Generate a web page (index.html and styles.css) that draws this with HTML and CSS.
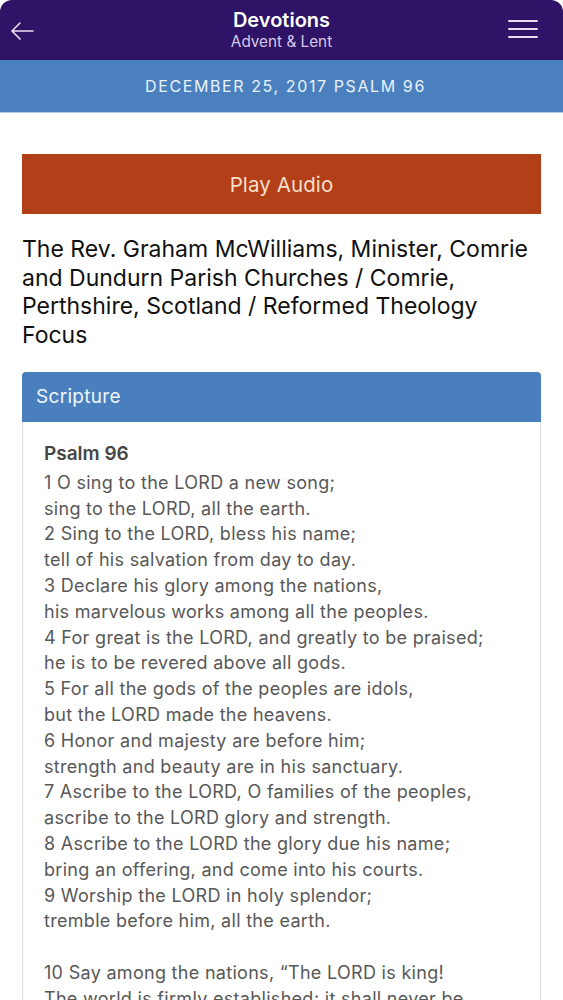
FILE: index.html
```html
<!DOCTYPE html>
<html>
<head>
<meta charset="utf-8">
<link rel="stylesheet" href="styles.css">
</head>
<body>
<div class="app">
  <header class="topbar">
    <button class="icon-btn back" aria-label="Back">
      <svg width="24" height="18" viewBox="0 0 24 18"><path d="M23 9H2M10 1L2 9l8 8" fill="none" stroke="#ece0f4" stroke-width="1.6" stroke-linecap="round" stroke-linejoin="round"/></svg>
    </button>
    <div class="titles">
      <div class="title">Devotions</div>
      <div class="subtitle">Advent &amp; Lent</div>
    </div>
    <button class="icon-btn menu" aria-label="Menu">
      <span></span><span></span><span></span>
    </button>
  </header>
  <div class="datebar">DECEMBER 25, 2017 PSALM 96</div>
  <main class="content">
    <button class="play">Play Audio</button>
    <h1 class="author">The Rev. Graham McWilliams, Minister, Comrie and Dundurn Parish Churches / Comrie, Perthshire, Scotland / Reformed Theology Focus</h1>
    <section class="card">
      <div class="card-head">Scripture</div>
      <div class="card-body">
        <div class="psalm-title">Psalm 96</div>
        <p class="verses">1 O sing to the LORD a new song;<br>sing to the LORD, all the earth.<br>2 Sing to the LORD, bless his name;<br>tell of his salvation from day to day.<br>3 Declare his glory among the nations,<br>his marvelous works among all the peoples.<br>4 For great is the LORD, and greatly to be praised;<br>he is to be revered above all gods.<br>5 For all the gods of the peoples are idols,<br>but the LORD made the heavens.<br>6 Honor and majesty are before him;<br>strength and beauty are in his sanctuary.<br>7 Ascribe to the LORD, O families of the peoples,<br>ascribe to the LORD glory and strength.<br>8 Ascribe to the LORD the glory due his name;<br>bring an offering, and come into his courts.<br>9 Worship the LORD in holy splendor;<br>tremble before him, all the earth.</p>
        <p class="verses">10 Say among the nations, “The LORD is king!<br>The world is firmly established; it shall never be moved.</p>
      </div>
    </section>
  </main>
</div>
</body>
</html>
```
FILE: styles.css
```css
* { box-sizing: border-box; }
html, body { margin: 0; padding: 0; background: #fff; }
body { font-family: Inter, "Liberation Sans", Arial, sans-serif; overflow: hidden; height: 1000px; }
.app { width: 563px; }
.topbar {
  height: 60px;
  background: #2e1366;
  border-radius: 12px 12px 0 0;
  display: flex;
  align-items: center;
  justify-content: space-between;
  padding: 0 25px 0 10px;
  position: relative;
}
.icon-btn { background: none; border: 0; padding: 0; cursor: pointer; }
.back { width: 26px; height: 18px; display: flex; align-items: center; margin-top: 1px; }
.menu { width: 30px; height: 18px; display: flex; flex-direction: column; justify-content: space-between; margin-top: -2px; }
.menu span { display: block; height: 2px; background: #ecdcf2; border-radius: 1px; }
.titles { text-align: center; position: absolute; left: 0; right: 0; top: 8px; pointer-events: none; }
.title { color: #fff; font-weight: 600; font-size: 20px; line-height: 24px; }
.subtitle { color: #d6c8e8; font-size: 15.3px; line-height: 20px; }
.datebar {
  height: 53px;
  background: #4b80bf;
  border-bottom: 1px solid #a9cbe8;
  color: #e8f2fb;
  font-size: 16px;
  letter-spacing: 1.6px;
  display: flex;
  align-items: center;
  justify-content: center;
  padding: 0 0 1px 8px;
}
.content { padding: 41px 22px 0 22px; }
.play {
  display: block;
  width: 100%;
  height: 60px;
  background: #b23f17;
  border: 0;
  color: #f8dfcb;
  font-family: inherit;
  font-size: 20.5px;
  letter-spacing: 0.1px;
  padding: 0;
}
.author {
  margin: 21px 0 0 0;
  font-weight: normal;
  font-size: 23px;
  line-height: 28.7px;
  color: #111;
}
.card {
  margin-top: 22px;
  border: 1px solid #dcdcdc;
  border-radius: 4px 4px 0 0;
}
.card-head {
  height: 50px;
  margin: -1px -1px 0 -1px;
  background: #4a7fbd;
  border-radius: 4px 4px 0 0;
  color: #eef6fd;
  font-size: 19px;
  letter-spacing: 0.3px;
  display: flex;
  align-items: center;
  padding-left: 14px;
}
.card-body { padding: 20px 21px 0 21px; }
.psalm-title { font-weight: 600; font-size: 19px; color: #454545; line-height: 24px; }
.verses { margin: 4px 0 25.8px 0; font-size: 18px; letter-spacing: 0.3px; line-height: 25.8px; color: #585858; }
```
